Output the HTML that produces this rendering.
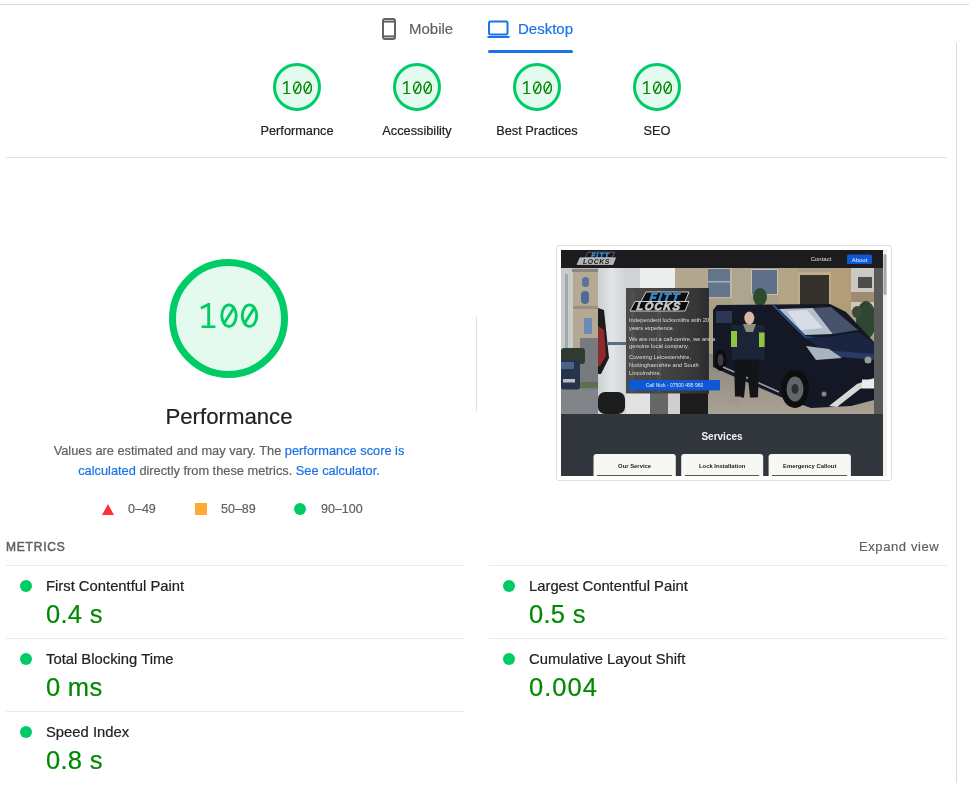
<!DOCTYPE html>
<html><head><meta charset="utf-8">
<style>
html,body{margin:0;padding:0;background:#fff;width:969px;height:785px;overflow:hidden;position:relative;font-family:"Liberation Sans",sans-serif;}
.wrap{position:absolute;left:0;top:0;width:969px;height:785px;will-change:transform;background:#fff;-webkit-text-stroke:0.2px currentColor;}
.a{position:absolute;white-space:nowrap;}
.hl{position:absolute;height:1px;background:#e0e0e0;}
.vl{position:absolute;width:1px;background:#e0e0e0;}
.tab{font-size:15px;line-height:20px;}
.glabel{font-size:12.75px;line-height:16px;color:#212121;text-align:center;width:120px;}
.gauge{position:absolute;width:42px;height:42px;border:3px solid #0c6;border-radius:50%;background:#e5faef;}
.gnum{position:absolute;font-family:"Liberation Mono",monospace;font-size:18px;line-height:20px;color:#080;width:120px;text-align:center;transform:scaleY(1.1);}
.mt{font-size:14.8px;line-height:18px;color:#212121;}
.mv{font-size:25.5px;line-height:30px;color:#080;letter-spacing:0.3px;}
.dot{position:absolute;width:12px;height:12px;border-radius:50%;background:#0c6;}
</style></head><body><div class="wrap">
<!-- top line -->
<div class="hl" style="left:0;top:4px;width:969px;background:#dcdcdc"></div>
<!-- right vertical line -->
<div class="vl" style="left:956px;top:43px;height:740px;background:#dadada"></div>

<!-- tabs -->
<svg class="a" style="left:381px;top:17px" width="16" height="24" viewBox="0 0 16 24">
<rect x="2" y="2" width="12" height="20" rx="2" fill="none" stroke="#5f6368" stroke-width="2"/>
<line x1="2" y1="4.6" x2="14" y2="4.6" stroke="#5f6368" stroke-width="2"/>
<line x1="2" y1="19.4" x2="14" y2="19.4" stroke="#5f6368" stroke-width="2"/>
</svg>
<div class="a tab" style="left:409px;top:19px;color:#5f6368">Mobile</div>
<svg class="a" style="left:486px;top:19px" width="25" height="20" viewBox="0 0 25 20">
<rect x="3" y="2.5" width="18.5" height="13" rx="1.5" fill="none" stroke="#1a73e8" stroke-width="2"/>
<rect x="1.5" y="17" width="22" height="2" fill="#1a73e8"/>
</svg>
<div class="a tab" style="left:518px;top:19px;color:#1a73e8">Desktop</div>
<div class="a" style="left:488px;top:50px;width:85px;height:3px;border-radius:2px;background:#1a73e8"></div>

<!-- gauges -->
<div class="gauge" style="left:273px;top:63px"></div>
<div class="gauge" style="left:393px;top:63px"></div>
<div class="gauge" style="left:513px;top:63px"></div>
<div class="gauge" style="left:633px;top:63px"></div>
<svg class="a" style="left:281.7px;top:80.5px" width="30.6" height="13.8" viewBox="-1 -1 60 27" stroke="#080" stroke-width="2.9"><path d="M0.9,4.6 L8.7,0.3 L8.7,24.2 M1.6,24.2 L15.4,24.2" fill="none"/><ellipse cx="29" cy="12.4" rx="7.2" ry="11.3" fill="none"/><path d="M24.2,20.2 L33.8,4.2" fill="none"/><ellipse cx="49.5" cy="12.4" rx="7.2" ry="11.3" fill="none"/><path d="M44.7,20.2 L54.3,4.2" fill="none"/></svg>
<svg class="a" style="left:401.7px;top:80.5px" width="30.6" height="13.8" viewBox="-1 -1 60 27" stroke="#080" stroke-width="2.9"><path d="M0.9,4.6 L8.7,0.3 L8.7,24.2 M1.6,24.2 L15.4,24.2" fill="none"/><ellipse cx="29" cy="12.4" rx="7.2" ry="11.3" fill="none"/><path d="M24.2,20.2 L33.8,4.2" fill="none"/><ellipse cx="49.5" cy="12.4" rx="7.2" ry="11.3" fill="none"/><path d="M44.7,20.2 L54.3,4.2" fill="none"/></svg>
<svg class="a" style="left:521.7px;top:80.5px" width="30.6" height="13.8" viewBox="-1 -1 60 27" stroke="#080" stroke-width="2.9"><path d="M0.9,4.6 L8.7,0.3 L8.7,24.2 M1.6,24.2 L15.4,24.2" fill="none"/><ellipse cx="29" cy="12.4" rx="7.2" ry="11.3" fill="none"/><path d="M24.2,20.2 L33.8,4.2" fill="none"/><ellipse cx="49.5" cy="12.4" rx="7.2" ry="11.3" fill="none"/><path d="M44.7,20.2 L54.3,4.2" fill="none"/></svg>
<svg class="a" style="left:641.7px;top:80.5px" width="30.6" height="13.8" viewBox="-1 -1 60 27" stroke="#080" stroke-width="2.9"><path d="M0.9,4.6 L8.7,0.3 L8.7,24.2 M1.6,24.2 L15.4,24.2" fill="none"/><ellipse cx="29" cy="12.4" rx="7.2" ry="11.3" fill="none"/><path d="M24.2,20.2 L33.8,4.2" fill="none"/><ellipse cx="49.5" cy="12.4" rx="7.2" ry="11.3" fill="none"/><path d="M44.7,20.2 L54.3,4.2" fill="none"/></svg>
<div class="a glabel" style="left:237px;top:123px">Performance</div>
<div class="a glabel" style="left:357px;top:123px">Accessibility</div>
<div class="a glabel" style="left:477px;top:123px">Best Practices</div>
<div class="a glabel" style="left:597px;top:123px">SEO</div>
<div class="hl" style="left:6px;top:157px;width:941px"></div>

<!-- big gauge -->
<div class="a" style="left:169px;top:259px;width:105px;height:105px;border:7px solid #0c6;border-radius:50%;background:#e5faef"></div>
<svg class="a" style="left:198.6px;top:302.6px" width="60" height="25.6" viewBox="-1 -1 60 27" preserveAspectRatio="none" stroke="#0c6" stroke-width="2.9"><path d="M0.9,4.6 L8.7,0.3 L8.7,24.2 M1.6,24.2 L15.4,24.2" fill="none"/><ellipse cx="29" cy="12.4" rx="7.2" ry="11.3" fill="none"/><path d="M24.2,20.2 L33.8,4.2" fill="none"/><ellipse cx="49.5" cy="12.4" rx="7.2" ry="11.3" fill="none"/><path d="M44.7,20.2 L54.3,4.2" fill="none"/></svg>
<div class="a" style="left:129px;top:403px;width:200px;text-align:center;font-size:22.2px;line-height:28px;color:#212121">Performance</div>
<div class="a" style="left:29px;top:441px;width:400px;text-align:center;font-size:12.8px;line-height:20px;color:#616161;white-space:normal">Values are estimated and may vary. The <span style="color:#1a73e8">performance score is calculated</span> directly from these metrics. <span style="color:#1a73e8">See calculator.</span></div>
<!-- legend -->
<svg class="a" style="left:102px;top:503px" width="12" height="12" viewBox="0 0 12 12"><polygon points="6,1 12,12 0,12" fill="#f33"/></svg>
<div class="a" style="left:128px;top:501px;font-size:12.5px;line-height:16px;color:#616161">0–49</div>
<div class="a" style="left:195px;top:503px;width:12px;height:12px;background:#fa3"></div>
<div class="a" style="left:221px;top:501px;font-size:12.5px;line-height:16px;color:#616161">50–89</div>
<div class="dot" style="left:294px;top:503px"></div>
<div class="a" style="left:321px;top:501px;font-size:12.5px;line-height:16px;color:#616161">90–100</div>

<!-- vertical divider -->
<div class="vl" style="left:476px;top:316px;height:96px"></div>

<!-- screenshot frame -->
<div class="a" style="left:556px;top:245px;width:334px;height:234px;border:1px solid #e0e0e0;border-radius:3px;background:#fff"></div>
<div class="a" id="shot" style="left:561px;top:250px;width:326px;height:226px;overflow:hidden;background:#343a40">
<!--SHOT--><svg width="326" height="226" viewBox="0 0 326 226" style="position:absolute;left:0;top:0;filter:blur(0.45px)">
<defs>
<linearGradient id="sky" x1="0" y1="0" x2="0" y2="1"><stop offset="0" stop-color="#b7b9bb"/><stop offset="1" stop-color="#98958d"/></linearGradient>
<linearGradient id="wall" x1="0" y1="0" x2="1" y2="0"><stop offset="0" stop-color="#cdd1d4"/><stop offset="0.5" stop-color="#e2e5e8"/><stop offset="1" stop-color="#d0d3d6"/></linearGradient>
<linearGradient id="gravel" x1="0" y1="0" x2="0" y2="1"><stop offset="0" stop-color="#8a857b"/><stop offset="1" stop-color="#aaa294"/></linearGradient>
<linearGradient id="box" x1="0" y1="0" x2="1" y2="0"><stop offset="0" stop-color="#4c4c4c"/><stop offset="0.5" stop-color="#444"/><stop offset="0.85" stop-color="#363636"/><stop offset="1" stop-color="#2a2a2c"/></linearGradient>
</defs>
<rect x="0" y="0" width="322" height="226" fill="#31363d"/>
<!-- left building strip -->
<rect x="0" y="18" width="37" height="146" fill="url(#sky)"/>
<rect x="0" y="18" width="12" height="90" fill="#c9cbcd"/>
<rect x="4" y="24" width="3" height="80" fill="#a4a8ac"/>
<rect x="12" y="19" width="25" height="85" fill="#b3a995"/>
<rect x="11" y="19" width="26" height="3" fill="#8e887c"/>
<rect x="21" y="27" width="7" height="10" rx="3.5" fill="#5a7396"/>
<rect x="20" y="41" width="8" height="13" rx="4" fill="#4f6c98"/>
<rect x="23" y="68" width="8" height="16" fill="#6a8ab8"/>
<rect x="12" y="56" width="25" height="3" fill="#9a9080"/>
<rect x="19" y="88" width="18" height="52" fill="#777b7e"/>
<rect x="0" y="98" width="24" height="16" rx="3" fill="#2e3b31"/>
<rect x="0" y="110" width="19" height="30" rx="3" fill="#27334d"/>
<rect x="0" y="112" width="13" height="7" fill="#4a6488"/>
<rect x="2" y="129" width="12" height="3.5" fill="#b8bcc4"/>
<rect x="19" y="132" width="18" height="6" fill="#5c7050"/>
<rect x="0" y="139.5" width="37" height="24.5" fill="#818488"/>
<!-- middle wall strip -->
<rect x="37" y="18" width="28" height="146" fill="url(#wall)"/>
<polygon points="37,58 43,60 48,108 40,124 37,124" fill="#1f1a1c"/>
<polygon points="37,76 43,80 45,106 39,116 37,116" fill="#8c2a2e"/>
<rect x="47" y="92" width="18" height="3" fill="#5d6a7a"/>
<rect x="37" y="142" width="27" height="22" rx="7" fill="#1c1c1c"/>
<!-- above overlay -->
<rect x="65" y="18" width="14" height="20" fill="#cfd3d5"/>
<rect x="79" y="18" width="35" height="20" fill="#eceeee"/>
<rect x="114" y="18" width="33" height="20" fill="#b3a78f"/>
<!-- under overlay -->
<rect x="65" y="143" width="82" height="21" fill="#6a6a68"/>
<rect x="65" y="143" width="24" height="21" fill="#e2e2e2"/>
<rect x="89" y="143" width="18" height="21" fill="#666"/>
<rect x="107" y="143" width="12" height="21" fill="#cfcfcf"/>
<rect x="119" y="143" width="28" height="21" fill="#1c1c1c"/>

<!-- right photo: building -->
<rect x="147" y="18" width="167" height="146" fill="#ab9f86"/>
<rect x="147" y="18" width="24" height="30" fill="#c0b8a6"/>
<rect x="147" y="19" width="22" height="28" fill="#62758a"/><rect x="147" y="31" width="22" height="1.5" fill="#a8b0b8"/>
<rect x="171" y="18" width="19" height="42" fill="#aea591"/>
<rect x="190" y="19" width="27" height="26" fill="#c6c0b0"/>
<rect x="191" y="20" width="25" height="24" fill="#5f7088"/>
<rect x="217" y="18" width="20" height="42" fill="#b4a586"/>
<rect x="237" y="22" width="33" height="36" fill="#c0ac88"/>
<rect x="239" y="25" width="29" height="31" fill="#35312d"/>
<rect x="270" y="18" width="20" height="42" fill="#b39c78"/>
<rect x="290" y="18" width="24" height="42" fill="#cbc8c2"/>
<rect x="297" y="27" width="14" height="11" fill="#4c4c4c"/>
<rect x="290" y="42" width="24" height="10" fill="#a08a70"/>
<ellipse cx="199" cy="47" rx="7" ry="9" fill="#2e4a2e"/>
<ellipse cx="305" cy="70" rx="10" ry="19" fill="#2f4631"/><ellipse cx="296" cy="62" rx="5" ry="6" fill="#3a4a3a"/>
<!-- gravel -->
<rect x="147" y="104" width="167" height="60" fill="url(#gravel)"/>
<!-- van body -->
<polygon points="152,60 156,55 269,54 285,62 313,92 313,150 290,156 250,158 220,147 165,123 152,117" fill="#141824"/>
<polygon points="155,61 171,61 171,73 155,73" fill="#34446a" fill-opacity="0.7"/>
<!-- windshield -->
<polygon points="218,59 252,58 272,84 244,85" fill="#b4bfcc"/>
<polygon points="226,61 246,60 262,78 240,80" fill="#d6dde6"/>
<polygon points="252,58 270,57 297,80 272,84" fill="#46536a"/>
<polyline points="212,55 244,87 313,95" fill="none" stroke="#2c4c8c" stroke-width="1.8"/>
<!-- hood -->
<polygon points="244,88 272,86 297,82 313,93 313,108 262,100" fill="#1b2440"/>
<polygon points="262,100 313,104 313,110 270,106" fill="#2a3a66"/>
<!-- headlight -->
<polygon points="245,96 268,99 281,108 255,110" fill="#a8b2c0"/>
<circle cx="307" cy="110" r="3.5" fill="#9a9a9a"/>
<circle cx="263" cy="144" r="2.5" fill="#888"/>
<!-- bumper chrome -->
<polygon points="268,156 296,134 313,128 313,133 299,139 276,157" fill="#d8d8d8"/>
<rect x="301" y="129.5" width="12" height="9" fill="#ececec"/>
<!-- wheels -->
<ellipse cx="159.5" cy="110" rx="6" ry="11" fill="#0d0d0d"/>
<ellipse cx="159.5" cy="110" rx="3" ry="6" fill="#3a3c42"/>
<ellipse cx="234" cy="139" rx="14" ry="19" fill="#0e0e0e"/>
<ellipse cx="234" cy="139" rx="8.5" ry="12.5" fill="#62656c"/>
<ellipse cx="234" cy="139" rx="3.5" ry="5" fill="#2e2e2e"/>
<line x1="162" y1="117" x2="218" y2="142" stroke="#9aa0a8" stroke-width="1.4"/>
<!-- man -->
<polygon points="173,109.6 198,109.6 197,147.5 189,147.5 186,118 183,147.5 174,147.5" fill="#121418"/>
<polygon points="170,75 203.6,75 203.6,109.6 171,109.6" fill="#1c2438"/>
<polygon points="182,74 195,74 192,82 185,82" fill="#8a9080"/>
<rect x="170" y="81" width="6" height="16" fill="#8cc63f"/>
<rect x="198" y="82.5" width="5.6" height="14.5" fill="#8cc63f"/>
<ellipse cx="188.3" cy="68" rx="5" ry="6.4" fill="#d8b8a4"/>
<rect x="168" y="146.6" width="12" height="6.4" fill="#a09888"/>
<rect x="194.6" y="147.5" width="9" height="4.5" fill="#a09888"/>
<!-- right gray strip -->
<rect x="313" y="18" width="9" height="146" fill="#5a5a5a"/>
<!-- overlay box -->
<rect x="65" y="38" width="83" height="105.5" fill="url(#box)" fill-opacity="0.92"/>
<rect x="70" y="40" width="3" height="103" fill="#fff" fill-opacity="0.05"/><rect x="96" y="40" width="4" height="103" fill="#fff" fill-opacity="0.05"/>
<!-- big logo -->
<polygon points="85,42 128,42 124,51.5 80,51.5" fill="#0c0c0c" stroke="#e0e0e0" stroke-width="0.9"/>
<text x="104" y="50.8" font-family="Liberation Sans" font-weight="bold" font-style="italic" font-size="11" fill="#2f8ad6" stroke="#2f8ad6" stroke-width="0.9" text-anchor="middle" letter-spacing="2" transform="skewX(-8) translate(7,0)">FITT</text>
<polygon points="74,51.5 128,51.5 124,61 69,61" fill="#0c0c0c" stroke="#e0e0e0" stroke-width="0.9"/>
<text x="98" y="60.3" font-family="Liberation Sans" font-weight="bold" font-style="italic" font-size="11" fill="#c8c8c8" stroke="#c8c8c8" stroke-width="0.7" text-anchor="middle" letter-spacing="1.2" transform="skewX(-8) translate(8,0)">LOCKS</text>
<!-- overlay text -->
<g font-family="Liberation Sans" font-size="5.75" fill="#dedede">
<text x="68" y="72.2">Independent locksmiths with 20</text>
<text x="68" y="80">years experience.</text>
<text x="68" y="90.9">We are not a call-centre, we are a</text>
<text x="68" y="98.3">genuine local company.</text>
<text x="68" y="109.3">Covering Leicestershire,</text>
<text x="68" y="117.1">Nottinghamshire and South</text>
<text x="68" y="124.9">Lincolnshire.</text>
</g>
<rect x="68" y="130" width="91" height="10.4" fill="#0e58d4"/>
<text x="113.5" y="137.2" font-family="Liberation Sans" font-size="5" fill="#e8eefc" text-anchor="middle">Call Nick - 07500 495 960</text>
<!-- nav -->
<rect x="0" y="0" width="322" height="18" fill="#1c1c1e"/>
<polygon points="27,2.2 53.5,2.2 51,7.8 24,7.8" fill="#101820" stroke="#9aa0a8" stroke-width="0.5"/>
<text x="39.5" y="7.7" font-family="Liberation Sans" font-weight="bold" font-style="italic" font-size="6.6" fill="#3a8fd8" stroke="#3a8fd8" stroke-width="0.5" text-anchor="middle" letter-spacing="1.2">FITT</text>
<polygon points="19,7.8 54.5,7.8 52,14.5 16,14.5" fill="#b4b4b4" stroke="#d8d8d8" stroke-width="0.6"/>
<text x="35.5" y="14" font-family="Liberation Sans" font-weight="bold" font-style="italic" font-size="6.8" fill="#1a1a1a" text-anchor="middle" letter-spacing="0.6">LOCKS</text>
<text x="260" y="11.3" font-family="Liberation Sans" font-size="6" fill="#e0e0e0" text-anchor="middle">Contact</text>
<rect x="286" y="4.5" width="25" height="9.5" rx="1.5" fill="#0e58d4"/>
<text x="298.5" y="11.6" font-family="Liberation Sans" font-size="6" fill="#f0f4ff" text-anchor="middle">About</text>
<!-- services -->
<text x="161" y="189.5" font-family="Liberation Sans" font-weight="bold" font-size="10" fill="#f2f2f2" text-anchor="middle">Services</text>
<g font-family="Liberation Sans" font-weight="bold" font-size="5.9" fill="#222" text-anchor="middle">
<rect x="32.5" y="204" width="82.3" height="26" rx="3" fill="#f7f7f3"/>
<text x="73.6" y="218">Our Service</text>
<rect x="120.2" y="204" width="82" height="26" rx="3" fill="#f7f7f3"/>
<text x="161.2" y="218">Lock Installation</text>
<rect x="207.6" y="204" width="82.3" height="26" rx="3" fill="#f7f7f3"/>
<text x="248.7" y="218">Emergency Callout</text>
</g>
<rect x="36" y="225" width="75" height="1" fill="#555"/>
<rect x="124" y="225" width="74" height="1" fill="#555"/>
<rect x="211" y="225" width="75" height="1" fill="#555"/>
<!-- scrollbar -->
<rect x="322" y="0" width="4" height="226" fill="#f1f1f1"/>
<rect x="322.5" y="4" width="3" height="41" rx="1.5" fill="#a8a8a8"/>
</svg><!--/SHOT-->
</div>

<!-- metrics -->
<div class="a" style="left:6px;top:539px;font-size:12px;line-height:16px;font-weight:normal;-webkit-text-stroke:0.5px #5f6368;letter-spacing:0.8px;color:#5f6368">METRICS</div>
<div class="a" style="left:859px;top:539px;font-size:13px;line-height:16px;letter-spacing:0.6px;color:#5f6368">Expand view</div>
<div class="hl" style="left:6px;top:565px;width:458px;background:#ebebeb"></div>
<div class="hl" style="left:489px;top:565px;width:458px;background:#ebebeb"></div>
<div class="hl" style="left:6px;top:638px;width:458px;background:#ebebeb"></div>
<div class="hl" style="left:489px;top:638px;width:458px;background:#ebebeb"></div>
<div class="hl" style="left:6px;top:711px;width:458px;background:#ebebeb"></div>

<div class="dot" style="left:20px;top:580px"></div>
<div class="a mt" style="left:46px;top:577px">First Contentful Paint</div>
<div class="a mv" style="left:46px;top:599px">0.4 s</div>
<div class="dot" style="left:503px;top:580px"></div>
<div class="a mt" style="left:529px;top:577px">Largest Contentful Paint</div>
<div class="a mv" style="left:529px;top:599px">0.5 s</div>

<div class="dot" style="left:20px;top:653px"></div>
<div class="a mt" style="left:46px;top:650px">Total Blocking Time</div>
<div class="a mv" style="left:46px;top:672px">0 ms</div>
<div class="dot" style="left:503px;top:653px"></div>
<div class="a mt" style="left:529px;top:650px">Cumulative Layout Shift</div>
<div class="a mv" style="left:529px;top:672px;letter-spacing:1px">0.004</div>

<div class="dot" style="left:20px;top:726px"></div>
<div class="a mt" style="left:46px;top:723px">Speed Index</div>
<div class="a mv" style="left:46px;top:745px">0.8 s</div>
</div></body></html>
